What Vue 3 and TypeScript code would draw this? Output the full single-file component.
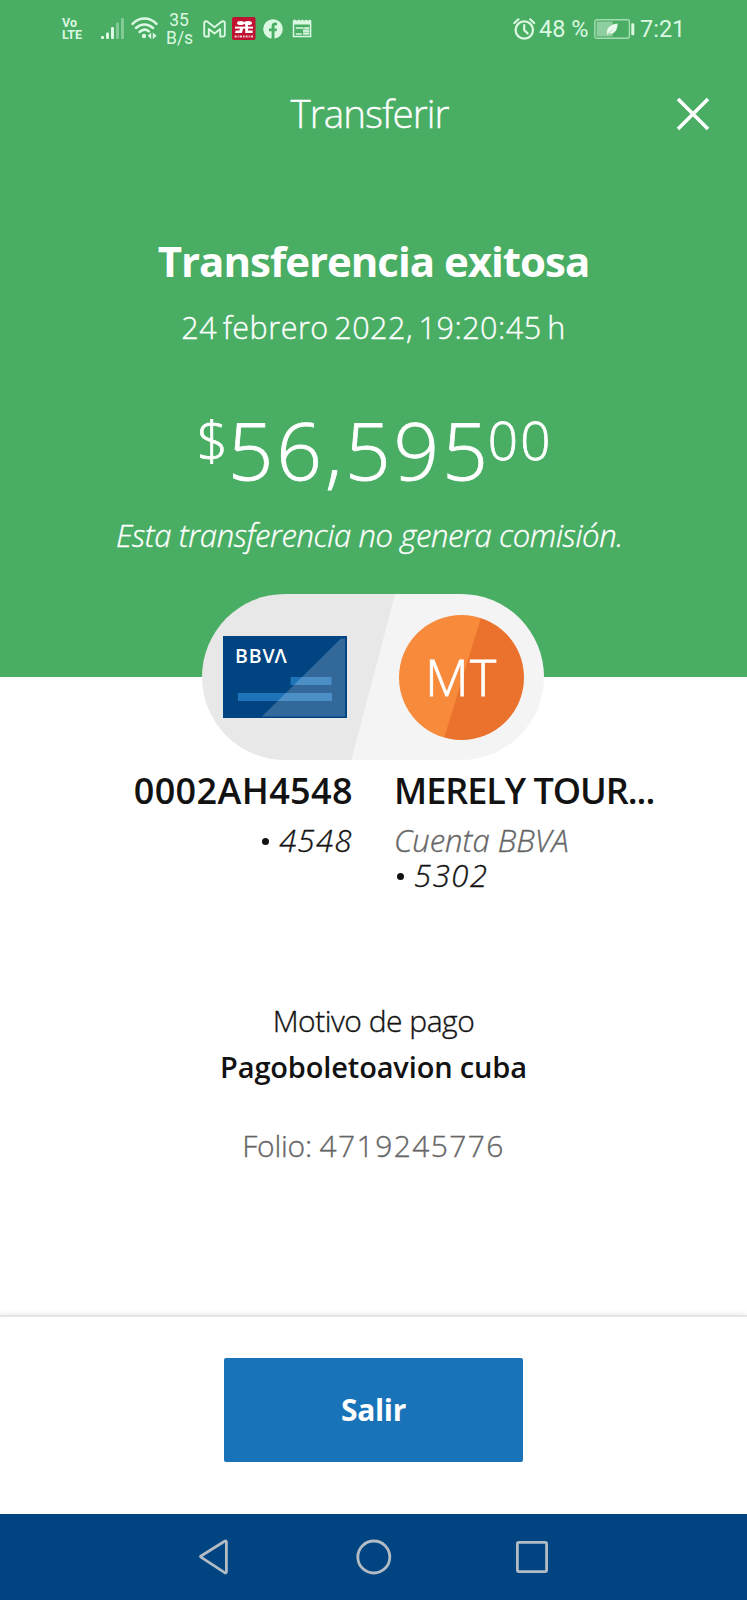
<script setup lang="ts">
interface Account {
  name: string
  kind?: string
  digits: string
}

const origin: Account = { name: '0002AH4548', digits: '4548' }
const target: Account = { name: 'MERELY TOUR...', kind: 'Cuenta BBVA', digits: '5302' }
const amount = { symbol: '$', whole: '56,595', cents: '00' }
const signalBars = [
  { h: 3, on: true },
  { h: 6.5, on: true },
  { h: 12, on: true },
  { h: 16.5, on: false },
  { h: 21, on: false },
]
</script>

<template>
  <div class="screen">
    <section class="hero">
      <div class="status">
        <div class="volte"><span>Vo</span><span>LTE</span></div>
        <svg class="signal" width="24" height="22" viewBox="0 0 24 22">
          <rect v-for="(b, i) in signalBars" :key="i" :x="i * 5" :y="21 - b.h" width="3" :height="b.h" rx="1"
            fill="#dcf8e2" :opacity="b.on ? 1 : 0.4" />
        </svg>
        <svg class="wifi" width="27" height="23" viewBox="0 0 27 23" fill="none" stroke="#dcf8e2" stroke-width="2.5"
          stroke-linecap="round">
          <path d="M1.5 6.8C8.5-.2 18.5-.2 25.5 6.8M5 11C10 6.2 17 6.2 22 11M8.6 15C11.6 12.2 15 12 17.8 14.2" />
          <circle cx="13" cy="19" r="2.2" fill="#dcf8e2" stroke="none" />
          <path d="M20.2 15.4v6.8l-3.4-3.4zM21.8 15.4v6.8l3.8-3.4z" fill="#dcf8e2" stroke="none" />
        </svg>
        <div class="speed"><span>35</span><span>B/s</span></div>
        <svg class="gmail" width="23" height="18" viewBox="0 0 23 18" fill="none" stroke="#dcf8e2" stroke-width="1.9"
          stroke-linejoin="round">
          <path d="M1.2 3.2Q1.2 1.2 3 1.2L4.2 1.4 11.5 7.3 18.8 1.4 20 1.2Q21.8 1.2 21.8 3.2V15Q21.8 16.5 20.3 16.5H17.2V9L11.5 13.4 5.8 9V16.5H2.7Q1.2 16.5 1.2 15z" />
        </svg>
        <svg class="redapp" width="24" height="23" viewBox="0 0 24 23">
          <rect width="23.5" height="23" rx="2" fill="#be1230" />
          <g fill="#fff">
            <ellipse cx="8.6" cy="6" rx="3.6" ry="2.1" />
            <ellipse cx="16" cy="6" rx="4" ry="2.1" />
            <path d="M3 9.6H21V11.6H3z" />
            <path d="M8.2 11H11.2L10 16H3L3.8 13.6H7.4zM13.2 7V16H20.6V13.6H16V7z" />
            <path d="M2.6 18.6h2v1.8h-2zM5.6 18.6h1v1.8h-1zM7.6 18.6h2.4v1.8H7.6zM11 18.6h1.6v1.8H11zM13.6 18.6h2v1.8h-2zM16.6 18.6h1.2v1.8h-1.2zM18.8 18.6h2.2v1.8h-2.2z" opacity=".8" />
          </g>
        </svg>
        <svg class="fb" width="20" height="20" viewBox="0 0 20 20">
          <circle cx="10" cy="10" r="9.8" fill="#dcf8e2" />
          <path d="M8.6 20V12.3H6V9.4H8.6V7.3C8.6 4.8 10 3.6 12.2 3.6L14 3.8V6.2H12.8C11.8 6.2 11.5 6.8 11.5 7.5V9.4H14L13.5 12.3H11.5V20z" fill="#49ae64" />
        </svg>
        <svg class="news" width="20" height="19" viewBox="0 0 20 19">
          <path d="M.8 1.5L2.8.4 4.8 1.8 6.8.4 8.6 1.8 10.4.4 12.3 1.8 14 .4 16 1.8 17.8.4 19.3 1.5V5.5H.8z" fill="#dcf8e2" />
          <path d="M1.5 5V17.5H18.6V5M3.8 9H11M12.5 9H17M11 12H17M11 14.8H17M3.8 14.9H9.8" fill="none" stroke="#dcf8e2" stroke-width="1.5" />
          <rect x="11" y="8.3" width="6.5" height="7.2" fill="#dcf8e2" opacity=".55" />
        </svg>
        <svg class="alarm" width="23" height="22" viewBox="0 0 23 22" fill="none" stroke="#dcf8e2" stroke-width="2.2"
          stroke-linecap="round">
          <circle cx="11.3" cy="12" r="8.7" />
          <path d="M1.4 5L5.4 1.3M21.2 5L17.2 1.3M11.2 7V12L14.6 15.4" />
        </svg>
        <span class="pct">48 %</span>
        <svg class="battery" width="41" height="20" viewBox="0 0 41 20">
          <rect x=".8" y=".8" width="34.6" height="18.4" rx="2" fill="none" stroke="#a5dcb2" stroke-width="1.4" />
          <rect x="2.6" y="2.6" width="16" height="14.8" fill="#8fcf9f" />
          <path d="M13.2 15.4C12 9.8 15.4 5.6 23.6 4.6 23.4 11.6 20.4 15.6 15 14.6L13.8 16.2z" fill="#eafbee" />
          <path d="M14 15.4L18 11" stroke="#8fcf9f" stroke-width=".7" />
          <rect x="37.3" y="4.2" width="3" height="12" rx="1.2" fill="#dcf8e2" />
        </svg>
        <span class="clock">7:21</span>
      </div>

      <header class="bar">
        <h1>Transferir</h1>
        <svg class="close" width="34" height="34" viewBox="0 0 34 34">
          <path d="M2 2L32 32M32 2L2 32" stroke="#fff" stroke-width="3.6" />
        </svg>
      </header>

      <h2>Transferencia exitosa</h2>
      <p class="date">24 febrero 2022, 19:20:45 h</p>
      <div class="amount">
        <span class="symbol">{{ amount.symbol }}</span>
        <span class="whole">{{ amount.whole }}</span>
        <span class="cents">{{ amount.cents }}</span>
      </div>
      <p class="fee">Esta transferencia no genera comisión.</p>
    </section>

    <div class="pill">
      <div class="card">
        <div class="brand" aria-label="BBVA">BBV<span>Λ</span></div>
        <svg class="cardart" width="124" height="82" viewBox="0 0 124 82">
          <rect x="67.5" y="41" width="41" height="8" fill="#1f73b8" />
          <rect x="15" y="57" width="94" height="8" fill="#1f73b8" />
          <path d="M39 80.5L118 2.5H122V80.5z" fill="#fff" opacity=".2" />
        </svg>
      </div>
      <div class="avatar">MT</div>
    </div>

    <section class="accounts">
      <div class="account from">
        <strong>{{ origin.name }}</strong>
        <p class="num"><i></i>{{ origin.digits }}</p>
      </div>
      <div class="account">
        <strong class="tight">{{ target.name }}</strong>
        <p class="kind">{{ target.kind }}</p>
        <p class="num"><i></i>{{ target.digits }}</p>
      </div>
    </section>

    <section class="details">
      <p class="label">Motivo de pago</p>
      <p class="reason">Pagoboletoavion cuba</p>
      <p class="folio">Folio: <span>4719245776</span></p>
    </section>

    <footer class="actions">
      <button type="button">Salir</button>
    </footer>

    <nav class="nav">
      <svg width="36" height="40" viewBox="0 0 36 40">
        <path d="M4 20.2Q3 19.6 4 19L27.6 4.2Q29.4 3.4 29.4 5.2V34.6Q29.4 36.4 27.6 35.6z" />
      </svg>
      <svg width="36" height="40" viewBox="0 0 36 40">
        <circle cx="17.8" cy="20" r="16" />
      </svg>
      <svg width="36" height="40" viewBox="0 0 36 40">
        <rect x="3.4" y="5.4" width="29.2" height="29.2" rx="1.5" />
      </svg>
    </nav>
  </div>
</template>

<style>
body {
  margin: 0;
  background: #fff;
}
</style>

<style scoped>
.screen {
  width: 747px;
  height: 1600px;
  display: flex;
  flex-direction: column;
  background: #fff;
  color: #121212;
  font-family: "Open Sans", "Noto Sans", sans-serif;
  font-weight: 300;
  white-space: nowrap;
  overflow: hidden;
}
h1, h2, p { margin: 0; font-weight: 300; }
svg { display: block; flex: none; }
.bar h1, .date, .fee, .kind, .num, .label, .folio { -webkit-text-stroke: 0.35px currentColor; }
.amount, .avatar { -webkit-text-stroke: 0.8px currentColor; }

.hero {
  height: 677px;
  flex: none;
  background: #49ae64;
  color: #fff;
  text-align: center;
}

.status {
  height: 57px;
  display: flex;
  align-items: center;
  padding-left: 62px;
  color: #dcf8e2;
  font-family: Roboto, "Noto Sans", sans-serif;
  font-weight: 400;
}
.volte {
  width: 21px;
  display: flex;
  flex-direction: column;
  font-size: 12.5px;
  font-weight: 700;
  line-height: 12px;
  text-align: left;
}
.signal { margin-left: 18px; }
.wifi { margin-left: 6px; }
.speed {
  width: 26px;
  margin-left: 8px;
  padding-top: 1px;
  display: flex;
  flex-direction: column;
  font-size: 17.5px;
  line-height: 18.5px;
}
.gmail { margin-left: 11px; }
.redapp { margin-left: 6px; }
.fb { margin-left: 7px; }
.news { margin-left: 9px; }
.alarm { margin-left: 201px; }
.pct { width: 52px; margin-left: 3px; font-size: 23.5px; text-align: left; }
.battery { margin-left: 3px; }
.clock { margin-left: 5px; font-size: 23.5px; }

.bar {
  height: 114px;
  display: grid;
  grid-template-columns: 100px 1fr 108px;
  align-items: center;
}
.bar h1 {
  grid-column: 2;
  padding-bottom: 2px;
  font-size: 38.5px;
  line-height: 52px;
  letter-spacing: -0.95px;
}
.close { justify-self: center; }

h2 {
  margin-top: 62px;
  font-size: 42px;
  font-weight: 700;
  line-height: 56px;
  letter-spacing: -1.02px;
}
.date {
  margin-top: 18px;
  font-size: 30.5px;
  line-height: 40px;
  letter-spacing: 0.5px;
  word-spacing: -2.8px;
}
.amount {
  height: 90px;
  margin-top: 57px;
  padding-left: 3px;
  display: flex;
  justify-content: center;
  align-items: flex-start;
}
.symbol { font-size: 54px; line-height: 71px; }
.whole { font-size: 80px; line-height: 90px; letter-spacing: 2.9px; }
.cents { margin-left: -3px; font-size: 53px; line-height: 71px; letter-spacing: 2.4px; }
.fee {
  margin-top: 21px;
  padding-right: 8px;
  font-size: 31px;
  font-style: italic;
  line-height: 40px;
  letter-spacing: -0.35px;
}

.pill {
  width: 342px;
  height: 166px;
  flex: none;
  box-sizing: border-box;
  margin: -83px 0 0 202px;
  padding: 0 20px 0 21px;
  display: flex;
  align-items: center;
  justify-content: space-between;
  border-radius: 83px;
  background: linear-gradient(104.8deg, #e8e8e8 49.9%, #f4f4f4 50.2%);
}
.card {
  width: 124px;
  height: 82px;
  display: grid;
  background: #004481;
}
.card > * { grid-area: 1 / 1; }
.brand {
  padding: 7px 0 0 12px;
  color: #fff;
  font-size: 19.5px;
  font-weight: 600;
  line-height: 26px;
  letter-spacing: 0.9px;
}
.brand span { margin-left: -1px; }
.avatar {
  width: 125px;
  height: 125px;
  border-radius: 50%;
  background: linear-gradient(107deg, #f78a3b 50.4%, #ea722c 51%);
  color: #fff;
  font-size: 50px;
  line-height: 124px;
  letter-spacing: 1.5px;
  text-align: center;
}

.accounts {
  margin-top: 8.5px;
  height: 130px;
  display: grid;
  grid-template-columns: 353px 1fr;
  column-gap: 41px;
}
.account {
  display: flex;
  flex-direction: column;
  font-size: 31px;
  font-style: italic;
  line-height: 35.5px;
}
.from { align-items: flex-end; }
strong {
  margin-bottom: 10px;
  font-size: 36px;
  font-style: normal;
  font-weight: 600;
  line-height: 44px;
  letter-spacing: 0.38px;
}
.tight { letter-spacing: -1.02px; }
.kind { color: #666; }
.num {
  display: flex;
  align-items: center;
  letter-spacing: 1.6px;
}
.num i {
  width: 7px;
  height: 7px;
  margin: 2px 10px 0 3px;
  border-radius: 50%;
  background: #121212;
}
.from .num { letter-spacing: 1.4px; }

.details {
  margin-top: 102.5px;
  text-align: center;
}
.label { font-size: 30px; line-height: 40px; letter-spacing: -0.5px; }
.reason {
  margin-top: 3px;
  font-size: 29px;
  font-weight: 600;
  line-height: 46px;
  letter-spacing: -0.15px;
}
.folio {
  margin-top: 35.5px;
  color: #666;
  font-size: 30px;
  line-height: 40px;
  letter-spacing: -0.2px;
}
.folio span { letter-spacing: 1.4px; }

.actions {
  height: 197px;
  flex: none;
  box-sizing: border-box;
  margin-top: auto;
  padding-top: 41px;
  display: flex;
  justify-content: center;
  align-items: flex-start;
  background: #fff;
  box-shadow: 0 -2px 1px #e6e6e6, 0 -4px 5px #f0f0f0;
}
button {
  width: 299px;
  height: 104px;
  padding: 0 0 1px;
  border: 0;
  border-radius: 2px;
  background: #1973b8;
  color: #fff;
  font: 700 30px/40px "Open Sans", "Noto Sans", sans-serif;
  letter-spacing: -0.3px;
}

.nav {
  height: 86px;
  flex: none;
  display: flex;
  justify-content: center;
  align-items: center;
  gap: 122.5px;
  background: #004481;
}
.nav svg {
  fill: none;
  stroke: #b3bcc5;
  stroke-width: 2.8;
}
</style>
